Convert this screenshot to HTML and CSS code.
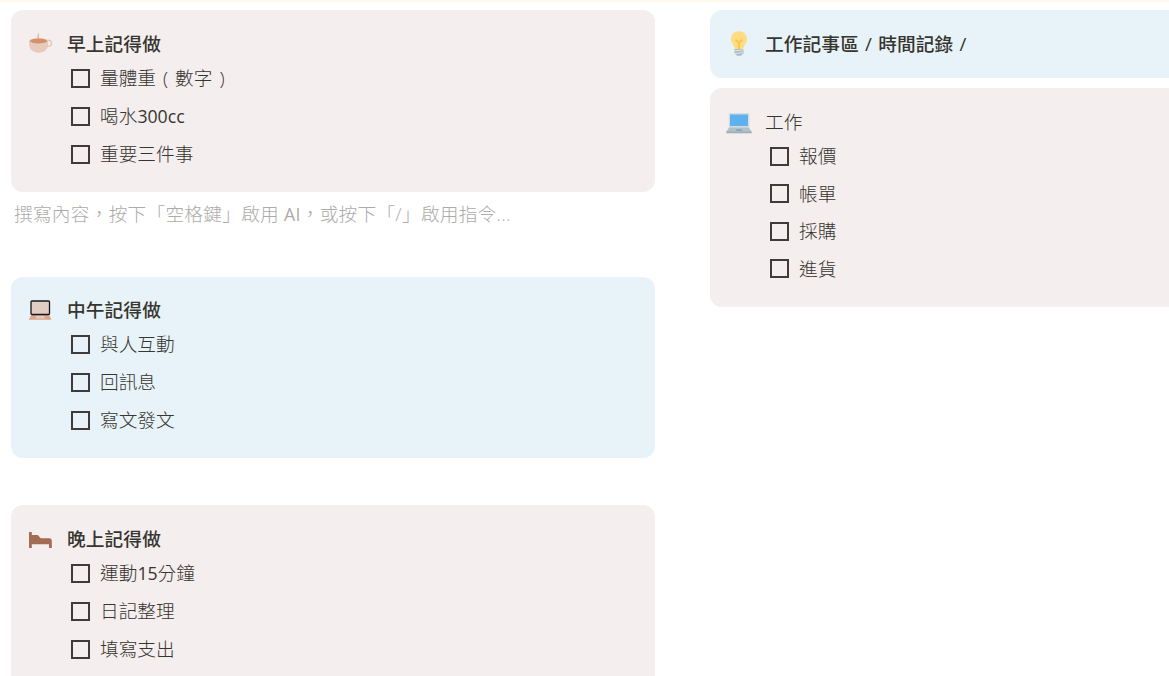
FILE: index.html
```html
<!DOCTYPE html>
<html lang="zh-Hant">
<head>
    <meta charset="UTF-8">
    <meta name="viewport" content="width=device-width, initial-scale=1.0">
    <title>每日待辦</title>
    <link rel="stylesheet" href="styles.css">
</head>
<body>
    <main class="board">
        <div class="column">
            <section class="callout pink">
                <div class="callout-head">
                    <svg class="icon" viewBox="0 0 26 26">
                        <path d="M11 7.500c-2.500-2 1-3-.3-6 3 2 0 3.300 1.800 6z" fill="#e5b9a3"/>
                        <circle cx="21.500" cy="12.300" r="3" fill="none" stroke="#e8cabd" stroke-width="1.500"/>
                        <path d="M2 10v3c0 5 4 8.700 9.800 8.700s9.400-3.700 9.400-8.700v-3z" fill="#e8cabd"/>
                        <ellipse cx="11.600" cy="10" rx="9.600" ry="3" fill="#e8cabd"/>
                        <ellipse cx="11.600" cy="10" rx="8.500" ry="2.400" fill="#d4906b"/>
                    </svg>
                    <h2>早上記得做</h2>
                </div>
                <ul class="todo">
                    <li><span class="box"></span><span>量體重<span class="paren">(</span>數字<span class="paren">)</span></span></li>
                    <li><span class="box"></span><span>喝水<span class="latin">300cc</span></span></li>
                    <li><span class="box"></span><span>重要三件事</span></li>
                </ul>
            </section>

            <p class="placeholder">撰寫內容，按下「空格鍵」啟用 <span class="latin">AI</span>，或按下「/」啟用指令...</p>

            <section class="callout blue noon">
                <div class="callout-head">
                    <svg class="icon" viewBox="0 0 26 26">
                        <path d="M4.500 17.500h17.500l2.500 5.300H1.700z" fill="#dda58c"/>
                        <path d="M9.500 18.800h7.500l1 2.700H8.500z" fill="#e3cdc3"/>
                        <rect x="4" y="4" width="18.500" height="13.500" rx="1" fill="#e2cdc4" stroke="#17181a" stroke-width="1.300"/>
                    </svg>
                    <h2>中午記得做</h2>
                </div>
                <ul class="todo">
                    <li><span class="box"></span><span>與人互動</span></li>
                    <li><span class="box"></span><span>回訊息</span></li>
                    <li><span class="box"></span><span>寫文發文</span></li>
                </ul>
            </section>

            <section class="callout pink night">
                <div class="callout-head">
                    <svg class="icon" viewBox="0 0 26 26">
                        <path d="M2 6h2.800v3h5.700c1.300 0 1.800 2.700 3.500 3.200h8.500c1.300 0 2.300 1 2.300 2.500V22H22v-3.700H4.800V22H2z" fill="#a36d54"/>
                    </svg>
                    <h2>晚上記得做</h2>
                </div>
                <ul class="todo">
                    <li><span class="box"></span><span>運動<span class="latin">15</span>分鐘</span></li>
                    <li><span class="box"></span><span>日記整理</span></li>
                    <li><span class="box"></span><span>填寫支出</span></li>
                </ul>
            </section>
        </div>

        <div class="column work">
            <section class="callout blue">
                <div class="callout-head">
                    <svg class="icon" viewBox="0 0 26 26">
                        <path d="M13 .3c-4.800 0-8 3.400-8 7.700 0 4.300 3.300 5.700 4 10.300h8c.7-4.600 4-6 4-10.300C21 3.700 17.800.3 13 .3z" fill="#ffdb83"/>
                        <path d="M13 18v-6.500L9.500 8.800M13 11.500l3.500-2.700" fill="none" stroke="#ffc546" stroke-width="1.800"/>
                        <path d="M8.500 18h9v4.300L15 24.700h-4l-2.500-2.400z" fill="#a9bdc7"/>
                        <path d="M8.500 19.800l9-.8M8.500 22.500l9-.8" stroke="#e0e8ec" stroke-width="1"/>
                    </svg>
                    <h2>工作記事區 / 時間記錄 /</h2>
                </div>
            </section>

            <section class="callout pink office">
                <div class="callout-head">
                    <svg class="icon" viewBox="0 0 26 26">
                        <rect x="2.800" y="4" width="20.500" height="15" rx="1" fill="#d3dde2"/>
                        <rect x="4" y="5.500" width="18" height="11.500" fill="#5eb0ef"/>
                        <path d="M3 18.500h20l2.700 4.500H.3z" fill="#b2c1c9"/>
                        <path d="M10.500 20h5l.8 2H9.700z" fill="#8fa5b0"/>
                        <path d="M.3 22.500h25.400v1.800H.3z" fill="#9db0ba"/>
                    </svg>
                    <p>工作</p>
                </div>
                <ul class="todo">
                    <li><span class="box"></span><span>報價</span></li>
                    <li><span class="box"></span><span>帳單</span></li>
                    <li><span class="box"></span><span>採購</span></li>
                    <li><span class="box"></span><span>進貨</span></li>
                </ul>
            </section>
        </div>
    </main>
</body>
</html>
```

FILE: styles.css
```css
* {
    margin: 0;
    padding: 0;
    box-sizing: border-box;
}

body {
    height: 100vh;
    overflow: hidden;
    background: #fff;
    border-top: 2px solid #fffaeb;
    color: #37352f;
    font-family: "Open Sans", "Noto Sans CJK TC", sans-serif;
    font-size: 18.7px;
    font-weight: 300;
}

.board {
    display: grid;
    grid-template-columns: 644px 1fr;
    column-gap: 55px;
    padding: 8px 0 0 11px;
}

.callout {
    padding: 19px 16px;
    border-radius: 12px;
}

.pink {
    background: #f4eeee;
}

.blue {
    background: #e7f3f8;
}

.callout-head {
    display: flex;
    align-items: center;
    gap: 14px;
    height: 30px;
    line-height: 30px;
    white-space: nowrap;
}

.callout-head h2 {
    font-size: 18.7px;
    font-weight: 500;
    letter-spacing: 0.1px;
    word-spacing: 1.2px;
}

.icon {
    width: 26px;
    height: 26px;
    flex: none;
}

.todo {
    list-style: none;
    padding-left: 44px;
}

.todo li {
    display: flex;
    align-items: center;
    gap: 10px;
    height: 38px;
    line-height: 38px;
}

.box {
    width: 19px;
    height: 19px;
    flex: none;
    border: 2px solid #3e3b38;
}

.latin {
    font-size: 17.7px;
    font-weight: 400;
}

.paren {
    display: inline-block;
    width: 19px;
    text-align: center;
}

.placeholder {
    height: 45px;
    padding-left: 3px;
    line-height: 44px;
    letter-spacing: 0.24px;
    color: #acaba9;
    white-space: nowrap;
}

.noon {
    margin-top: 40px;
    padding: 18px 16px 19px;
}

.night {
    margin-top: 47px;
}

/* right column runs off the window edge */
.work .callout {
    padding: 19px 0 19px 16px;
    border-radius: 12px 0 0 12px;
}

.work .callout-head {
    gap: 13px;
}

.office {
    margin-top: 10px;
}

.work .todo {
    padding-top: 0.3px;
}

.work .todo li {
    height: 37.6px;
    line-height: 37.6px;
}
```
